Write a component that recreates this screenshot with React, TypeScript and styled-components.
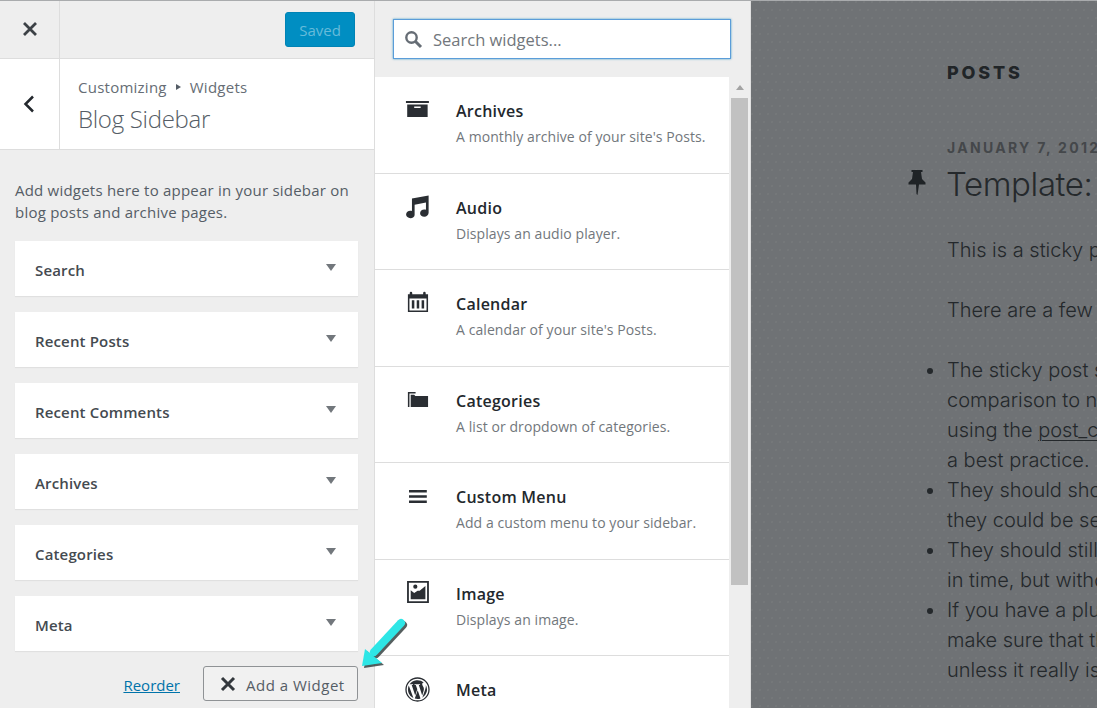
import React from 'react';
import styled, { createGlobalStyle } from 'styled-components';

const Global = createGlobalStyle`
  html, body { margin: 0; padding: 0; height: 100%; overflow: hidden; }
  #root { height: 100%; }
  * { box-sizing: border-box; }
`;

const UI = `"Open Sans", "Noto Sans", sans-serif`;
const Page = styled.div`
  position: relative; width: 1097px; height: 708px; overflow: hidden;
  display: flex; border-top: 1px solid #a9abad; font-family: ${UI};
  background: #eee;
`;
const Sidebar = styled.div`
  width: 375px; height: 707px; flex: none; display: flex; flex-direction: column;
  border-right: 1px solid #ddd; background: #eee;
`;
const TopBar = styled.div`
  height: 58px; flex: none; display: flex; align-items: stretch; border-bottom: 1px solid #ddd;
`;
const CloseCell = styled.div`
  width: 60px; display: flex; align-items: center; justify-content: center;
  border-right: 1px solid #ddd; padding-bottom: 2px;
`;
const SaveWrap = styled.div`
  flex: 1; display: flex; justify-content: flex-end; align-items: flex-start; padding: 11px 19px 0 0;
`;
const SavedButton = styled.div`
  width: 70px; height: 35px; border-radius: 3px; background: #008ec2; border: 1px solid #0083b5;
  color: #66bbda; font-size: 15px; display: flex; align-items: center; justify-content: center;
`;
const SectionHeader = styled.div`
  height: 91px; flex: none; display: flex; background: #fff; border-bottom: 1px solid #ddd;
`;
const BackCell = styled.div`
  width: 60px; display: flex; align-items: center; justify-content: center; border-right: 1px solid #ddd;
  padding-right: 2px; background: #fff;
`;
const Titles = styled.div`
  flex: 1; padding: 18px 0 0 18px; color: #555d66;
`;
const Crumb = styled.div`
  font-size: 15px; letter-spacing: 0.25px; line-height: 20px; display: flex; align-items: center; gap: 9px; color: #666d75;
`;
const CrumbArrow = styled.span`
  width: 0; height: 0; border-left: 5px solid #555d66; border-top: 3px solid transparent; border-bottom: 3px solid transparent;
`;
const Heading = styled.div`
  font-size: 24px; font-weight: 300; line-height: 32px; margin-top: 6px; color: #555d66;
  letter-spacing: -0.3px;
`;
const Description = styled.p`
  margin: 29px 0 18px; padding: 0 15px; font-size: 15px; line-height: 22px; color: #555d66; white-space: nowrap;
  letter-spacing: 0.22px;
`;
const Cards = styled.div`
  display: flex; flex-direction: column; gap: 16px; padding: 0 16px 0 15px;
`;
const Card = styled.div`
  height: 55px; background: #fff; box-shadow: 0 1px 1px rgba(0,0,0,.06);
  display: flex; justify-content: space-between; padding: 0 22px 0 20px;
  font-size: 15px; font-weight: 600; letter-spacing: 0.15px; color: #444a50;
`;
const CardTitle = styled.span`
  line-height: 59px;
`;
const Caret = styled.span`
  width: 0; height: 0; margin-top: 23px;
  border-top: 7px solid #72777c; border-left: 5px solid transparent; border-right: 5px solid transparent;
`;
const Foot = styled.div`
  display: flex; justify-content: flex-end; align-items: center; gap: 23px; padding: 15px 16px 0 0;
`;
const Reorder = styled.a`
  color: #0073aa; font-size: 15px; text-decoration: underline; margin-top: 3px;
`;
const AddButton = styled.div`
  width: 155px; height: 35px; border: 1px solid #8f9295; border-radius: 3px; background: #f1f1f1;
  display: flex; align-items: center; gap: 10px; padding: 0 0 0 16px; color: #555d66; font-size: 15px;
`;
const AddText = styled.span`
  padding-top: 2px; letter-spacing: 0.5px;
`;

const Library = styled.div`
  width: 376px; flex: none; height: 707px; display: flex; flex-direction: column; background: #eee;
  overflow: hidden; border-right: 1px solid #e0e0e0;
`;
const SearchArea = styled.div`
  height: 76px; flex: none; padding: 18px 19px 0 18px;
`;
const SearchBox = styled.div`
  height: 40px; border: 1px solid #5b9dd9; background: #fff; box-shadow: 0 0 2px rgba(30,140,190,.8);
  display: flex; align-items: center; gap: 10px; padding: 0 0 0 10px; font-size: 16.5px; color: #72777c;
`;
const ListArea = styled.div`
  flex: 1; display: flex; min-height: 0;
`;
const List = styled.div`
  width: 354px; flex: none; background: #fff; overflow: hidden;
`;
const Row = styled.div`
  height: 96.55px; flex: none; display: flex; border-bottom: 1px solid #ddd; padding: 20px 0 0 28px;
`;
const RowIcon = styled.div`
  width: 53px; flex: none; color: #2a2e33;
`;
const RowTitle = styled.div`
  font-size: 16px; font-weight: 600; letter-spacing: 0.25px; line-height: 28px; color: #23282d;
`;
const RowDesc = styled.div`
  font-size: 14px; line-height: 20px; margin-top: 2px; color: #72777c;
  letter-spacing: 0.08px;
`;
const Scrollbar = styled.div`
  flex: 1; display: flex; flex-direction: column; align-items: stretch; padding: 0 2px 0 2px;
`;
const ScrollUp = styled.div`
  height: 21px; display: flex; align-items: center; justify-content: center;
`;
const ScrollTri = styled.span`
  width: 0; height: 0; border-bottom: 5px solid #a3a3a3; border-left: 4px solid transparent; border-right: 4px solid transparent;
`;
const Thumb = styled.div`
  height: 487px; background: #c1c1c1;
`;

const Preview = styled.div`
  flex: 1; height: 707px; overflow: hidden; background-color: #6f7275;
  background-image:
    radial-gradient(circle at 1px 1px, rgba(255,255,255,.08) 0.5px, transparent 0.9px),
    radial-gradient(circle at 5px 9px, rgba(255,255,255,.08) 0.5px, transparent 0.9px);
  background-size: 8px 16px;
  padding: 0 0 0 196px; color: #24282b; white-space: nowrap;
  font-family: "Inter", "Lato", sans-serif; font-weight: 300;
`;
const SiteHead = styled.div`
  font-weight: 800; font-size: 18px;
  letter-spacing: 2.8px; margin-top: 62px; line-height: 20px; color: #212528;
`;
const PostDate = styled.div`
  font-weight: 700; font-size: 14px;
  letter-spacing: 2.3px; margin-top: 55px; line-height: 20px; color: #44474a;
`;
const PostTitle = styled.div`
  position: relative; font-size: 33px; line-height: 40px; margin-top: 6px; margin-left: -1px; color: #25292c; letter-spacing: -0.4px;
`;
const PinMark = styled.span`
  position: absolute; left: -39px; top: 5px; display: block; line-height: 0;
`;
const Para = styled.p`
  margin: 31px 0 0; font-size: 20px; line-height: 30px;
`;
const Para2 = styled(Para)`
  margin-top: 30px;
`;
const Bullets = styled.ul`
  margin: 30px 0 0; padding: 0; list-style: none; font-size: 20px; line-height: 30px;
`;
const Bullet = styled.li`
  position: relative;
  &::before {
    content: ''; position: absolute; left: -20px; top: 13px; width: 6px; height: 6px;
    border-radius: 50%; background: #24282b;
  }
`;
const Under = styled.span`
  text-decoration: underline; text-underline-offset: 3px; text-decoration-thickness: 1px;
`;
const Overlay = styled.svg`
  position: absolute; left: 355px; top: 611px; display: block;
`;

const I = ({ d }: { d: string }) => (
  <svg width={28} height={28} viewBox="0 0 20 20" fill="currentColor" style={{ display: 'block' }}><path fillRule="evenodd" d={d} /></svg>
);

const icons: Record<string, React.ReactNode> = {
  Archives: <I d="M2.100 2.900h16.400v1.400H2.100zM3 5.300h14.600v9H3zM8 6.800v1.100h4.600V6.800z" />,
  Audio: <I d="M18.300 1v12.400c0 1.600-1.400 2.900-3.100 2.900s-3-1-3-2.500 1.300-2.700 3-2.700c.5 0 .9.100 1.200.2V6L8.300 7.700V15c0 1.300-1.400 2.300-3 2.300S2.200 16.200 2.200 14.700 3.600 12 5.200 12c.5 0 .9.100 1.200.2V3.200z" />,
  Calendar: <I d="M3.500 3h1.300V2.200a.9.9 0 0 1 1.800 0V3h7.800V2.200a.9.900 0 0 1 1.800 0V3h1.700v12.800H3.500zM4.600 6v8.700h12.200V6zM6.300 7.300h1.800v6H6.300zM9.800 7.300h1.800v6H9.800zM13.300 7.300h1.800v6h-1.800z" />,
  Categories: <I d="M3.500 3.600h5.500v1H4.600V14.300H3.500zM5.500 5.500h2.500l.8 1h9.100v7.800H5.500z" />,
  'Custom Menu': <I d="M4.300 5H17v1.800H4.300zM4.300 8.750H17v1.800H4.300zM4.300 12.500H17v1.800H4.300z" />,
  Image: <I d="M2.900.7H18.500v15.700H2.900zM4.200 2V15.100H17.200V2zM5.500 13.800V7.400L8 9.200l2.400-1.500 1.500 0 2.600-2.200L16 4.200V13.800zM8.800 3.300a1.500 1.500 0 1 1 0 3 1.500 1.500 0 0 1 0-3z" />,
  Meta: <svg width={28} height={28} viewBox="0 0 28 28" style={{display:'block'}}><g transform="translate(1.500 .5)"><circle cx="13" cy="13" r="11.500" fill="none" stroke="currentColor" strokeWidth="1.300"/><path fill="currentColor" d="M3.500 13c0 3.800 2.200 7 5.400 8.500L4.300 9.100A9.400 9.400 0 0 0 3.500 13zM19.400 12.500c0-1.200-.4-2-.8-2.600-.5-.8-.9-1.400-.9-2.200 0-.8.600-1.600 1.500-1.600h.1A9.500 9.500 0 0 0 5.100 7.800h.6c1 0 2.500-.1 2.500-.1.500 0 .6.700.1.800 0 0-.5.100-1.100.1l3.500 10.300 2.100-6.200-1.500-4.100c-.5 0-1-.1-1-.1-.5 0-.5-.8 0-.8 0 0 1.600.1 2.500.1 1 0 2.500-.1 2.500-.1.500 0 .6.700.1.800 0 0-.5.100-1.100.1l3.400 10.300 1-3.200c.4-1.300.7-2.200.7-3zM13.200 13.800l-2.900 8.300a9.500 9.500 0 0 0 5.800-.1l-.1-.1zM21.300 8.500l.1 1c0 1-.2 2-.7 3.400l-2.900 8.400a9.500 9.500 0 0 0 3.500-12.800z"/></g></svg>,
};

const widgets = [
  ['Archives', "A monthly archive of your site's Posts."],
  ['Audio', 'Displays an audio player.'],
  ['Calendar', "A calendar of your site's Posts."],
  ['Categories', 'A list or dropdown of categories.'],
  ['Custom Menu', 'Add a custom menu to your sidebar.'],
  ['Image', 'Displays an image.'],
  ['Meta', ''],
];
const cards = ['Search', 'Recent Posts', 'Recent Comments', 'Archives', 'Categories', 'Meta'];

const ArrowShape = "M46 11L19 40";

export default function App() {
  return (
    <Page>
      <Global />
      <Sidebar>
        <TopBar>
          <CloseCell>
            <svg width="16" height="16" viewBox="0 0 16 16"><path d="M2 2l12 12M14 2L2 14" stroke="#3c4146" strokeWidth="2.800" /></svg>
          </CloseCell>
          <SaveWrap><SavedButton>Saved</SavedButton></SaveWrap>
        </TopBar>
        <SectionHeader>
          <BackCell>
            <svg width="12" height="18" viewBox="0 0 12 18"><path d="M10 1.500L2.500 9l7.500 7.500" fill="none" stroke="#23282d" strokeWidth="2.500" /></svg>
          </BackCell>
          <Titles>
            <Crumb>Customizing <CrumbArrow /> Widgets</Crumb>
            <Heading>Blog Sidebar</Heading>
          </Titles>
        </SectionHeader>
        <Description>Add widgets here to appear in your sidebar on<br />blog posts and archive pages.</Description>
        <Cards>
          {cards.map(c => <Card key={c}><CardTitle>{c}</CardTitle><Caret /></Card>)}
        </Cards>
        <Foot>
          <Reorder>Reorder</Reorder>
          <AddButton>
            <svg width="16" height="16" viewBox="0 0 16 16"><path d="M2 2l12 12M14 2L2 14" stroke="#32373c" strokeWidth="3" /></svg>
            <AddText>Add a Widget</AddText>
          </AddButton>
        </Foot>
      </Sidebar>
      <Library>
        <SearchArea>
          <SearchBox>
            <svg width="19" height="19" viewBox="0 0 19 19"><circle cx="7.500" cy="7.500" r="5.200" fill="none" stroke="#666d75" strokeWidth="2.400"/><path d="M11.500 11.500l5.500 5.500" stroke="#666d75" strokeWidth="3"/></svg>
            <span>Search widgets...</span>
          </SearchBox>
        </SearchArea>
        <ListArea>
          <List>
            {widgets.map(([t, d]) => (
              <Row key={t}>
                <RowIcon>{icons[t]}</RowIcon>
                <div><RowTitle>{t}</RowTitle>{d && <RowDesc>{d}</RowDesc>}</div>
              </Row>
            ))}
          </List>
          <Scrollbar>
            <ScrollUp><ScrollTri /></ScrollUp>
            <Thumb />
          </Scrollbar>
        </ListArea>
      </Library>
      <Preview>
        <SiteHead>POSTS</SiteHead>
        <PostDate>JANUARY 7, 2012</PostDate>
        <PostTitle>
          <PinMark>
            <svg width="20" height="26" viewBox="0 0 20 26"><path fill="#1f2326" d="M4.500 1h11v2h-1.500l1 7 3.500 3.500v2h-6.500L10.500 26l-1-1-.5-9.500H1.500v-2L5 10l1-7H4.500z"/></svg>
          </PinMark>
          Template: Sticky
        </PostTitle>
        <Para>This is a sticky post.</Para>
        <Para2>There are a few things to verify:</Para2>
        <Bullets>
          <Bullet>The sticky post should be distinctly recognizable<br />comparison to normal posts. You can style<br />using the <Under>post_class()</Under> function to generate<br />a best practice.</Bullet>
          <Bullet>They should show at the very top of the blog<br />they could be several posts back</Bullet>
          <Bullet>They should still show up again in their<br />in time, but without the sticky indicator.</Bullet>
          <Bullet>If you have a plugin or widget that lists<br />make sure that this sticky post is not<br />unless it really is popular.</Bullet>
        </Bullets>
      </Preview>
      <Overlay width="60" height="60" viewBox="0 0 60 60">
        <g transform="translate(2 2)" fill="#1c2a2a" fillOpacity=".75">
          <path d={ArrowShape} stroke="#1c2a2a" strokeOpacity=".75" strokeWidth="8" strokeLinecap="round" fill="none"/>
          <path d="M7 54l3-17 17 14z"/>
        </g>
        <path d={ArrowShape} stroke="#2ee6e6" strokeWidth="8" strokeLinecap="round" fill="none"/>
        <path d="M7 54l3-17 17 14z" fill="#2ee6e6"/>
      </Overlay>
    </Page>
  );
}
